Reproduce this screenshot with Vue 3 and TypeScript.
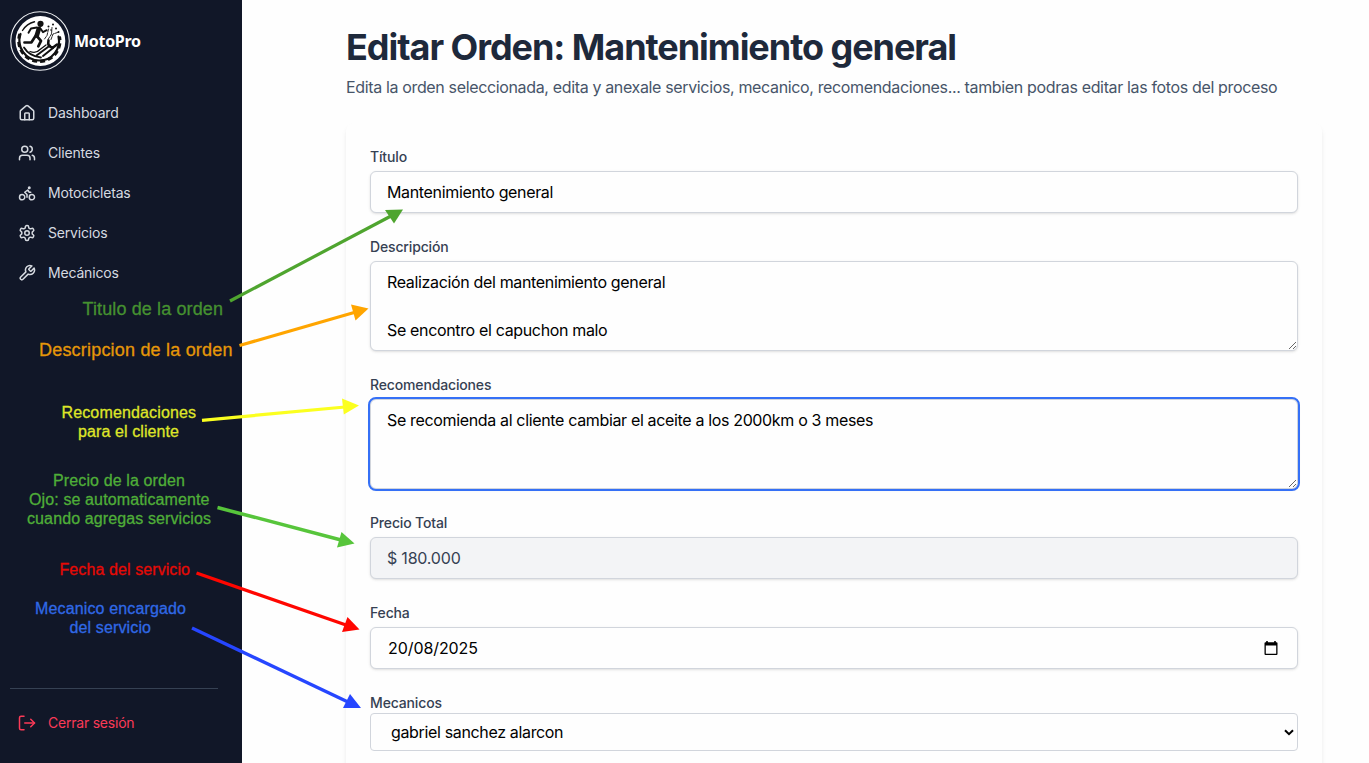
<script setup lang="ts">
interface NavItem { label: string; icon: string[] }
interface Note { lines: { text: string; x: number; y: number; w: number }[]; color: string; size: number }
interface Arrow { from: [number, number]; neck: [number, number]; head: string; color: string; width: number }

const nav: NavItem[] = [
  { label: 'Dashboard', icon: [
    'M15 21v-8a1 1 0 0 0-1-1h-4a1 1 0 0 0-1 1v8',
    'M3 10a2 2 0 0 1 .709-1.528l7-6a2 2 0 0 1 2.582 0l7 6A2 2 0 0 1 21 10v9a2 2 0 0 1-2 2H5a2 2 0 0 1-2-2z'] },
  { label: 'Clientes', icon: [
    'M16 21v-2a4 4 0 0 0-4-4H6a4 4 0 0 0-4 4v2',
    'M5 7a4 4 0 1 0 8 0a4 4 0 1 0-8 0',
    'M22 21v-2a4 4 0 0 0-3-3.87',
    'M16 3.13a4 4 0 0 1 0 7.75'] },
  { label: 'Motocicletas', icon: [
    'M15 17.5a3.5 3.5 0 1 0 7 0a3.5 3.5 0 1 0-7 0',
    'M2 17.5a3.5 3.5 0 1 0 7 0a3.5 3.5 0 1 0-7 0',
    'M14 5a1 1 0 1 0 2 0a1 1 0 1 0-2 0',
    'M12 17.5V14l-3-3 4-3 2 3h2'] },
  { label: 'Servicios', icon: [
    'M12.22 2h-.44a2 2 0 0 0-2 2v.18a2 2 0 0 1-1 1.73l-.43.25a2 2 0 0 1-2 0l-.15-.08a2 2 0 0 0-2.73.73l-.22.38a2 2 0 0 0 .73 2.73l.15.1a2 2 0 0 1 1 1.72v.51a2 2 0 0 1-1 1.74l-.15.09a2 2 0 0 0-.73 2.73l.22.38a2 2 0 0 0 2.73.73l.15-.08a2 2 0 0 1 2 0l.43.25a2 2 0 0 1 1 1.73V20a2 2 0 0 0 2 2h.44a2 2 0 0 0 2-2v-.18a2 2 0 0 1 1-1.73l.43-.25a2 2 0 0 1 2 0l.15.08a2 2 0 0 0 2.73-.73l.22-.39a2 2 0 0 0-.73-2.73l-.15-.08a2 2 0 0 1-1-1.74v-.5a2 2 0 0 1 1-1.74l.15-.09a2 2 0 0 0 .73-2.73l-.22-.38a2 2 0 0 0-2.73-.73l-.15.08a2 2 0 0 1-2 0l-.43-.25a2 2 0 0 1-1-1.73V4a2 2 0 0 0-2-2z',
    'M9 12a3 3 0 1 0 6 0a3 3 0 1 0-6 0'] },
  { label: 'Mecánicos', icon: [
    'M14.7 6.3a1 1 0 0 0 0 1.4l1.6 1.6a1 1 0 0 0 1.4 0l3.77-3.77a6 6 0 0 1-7.94 7.94l-6.91 6.91a2.12 2.12 0 0 1-3-3l6.91-6.91a6 6 0 0 1 7.94-7.94l-3.76 3.76z'] },
]

const descripcion = 'Realización del mantenimiento general\n\nSe encontro el capuchon malo'
const recomendaciones = 'Se recomienda al cliente cambiar el aceite a los 2000km o 3 meses'

const notes: Note[] = [
  { color: '#459130', size: 18, lines: [{ text: 'Titulo de la orden', x: 82.5, y: 315, w: 140.5 }] },
  { color: '#e59708', size: 18, lines: [{ text: 'Descripcion de la orden', x: 39, y: 356, w: 193.5 }] },
  { color: '#dfe528', size: 16, lines: [
    { text: 'Recomendaciones', x: 61.5, y: 418, w: 134.5 },
    { text: 'para el cliente', x: 78, y: 437, w: 101 }] },
  { color: '#4fae38', size: 16, lines: [
    { text: 'Precio de la orden', x: 53, y: 486, w: 132 },
    { text: 'Ojo: se automaticamente', x: 29, y: 505, w: 180.5 },
    { text: 'cuando agregas servicios', x: 27, y: 524, w: 184 }] },
  { color: '#e60a05', size: 16, lines: [{ text: 'Fecha del servicio', x: 59.5, y: 575, w: 130.5 }] },
  { color: '#3069e6', size: 16, lines: [
    { text: 'Mecanico encargado', x: 35, y: 614, w: 151 },
    { text: 'del servicio', x: 69.5, y: 633, w: 81.5 }] },
]

const arrows: Arrow[] = [
  { from: [230, 301], neck: [391, 216], head: '403,209.5 385,210 394,223.5', color: '#4fa52f', width: 3.2 },
  { from: [239.5, 345.5], neck: [355, 312.3], head: '368.5,308.5 351,304.5 355.5,320.5', color: '#ffa500', width: 3.2 },
  { from: [202, 420.3], neck: [345, 407], head: '359,405.5 342,398.5 343.8,414.5', color: '#fbff1f', width: 3.2 },
  { from: [217.5, 507.5], neck: [341, 540], head: '354.5,543.5 341.5,532 337,547.5', color: '#57c53b', width: 3.4 },
  { from: [196.5, 573], neck: [346, 625], head: '359.5,629.5 347.5,617 342,632', color: '#ff0600', width: 3.4 },
  { from: [192, 628], neck: [348, 702], head: '361,708 350,694 343,708', color: '#2646ff', width: 3.4 },
]
</script>

<template>
  <div class="page">
    <aside class="sidebar">
      <header class="brand">
        <svg class="logo" viewBox="0 0 60 60">
          <circle cx="30" cy="30" r="29.3" fill="none" stroke="#eef0f3" stroke-width="1.1" />
          <circle cx="30.4" cy="30" r="24.9" fill="#fff" />
          <g fill="none" stroke="#111" stroke-linecap="round" stroke-linejoin="round">
            <path d="M10.500 23A20 20 0 0 0 29.500 49.500A19.500 19.500 0 0 0 48.500 25.500" stroke-width="2.200" />
            <path d="M9.800 23A20.800 20.800 0 0 0 29.500 50.500A20.500 20.500 0 0 0 49.500 25.500" stroke-width="3" stroke-linecap="butt" stroke-dasharray="5 3" />
            <path d="M12.500 19.500A20 20 0 0 1 24.500 10.800" stroke-width="1.400" />
            <path d="M28.800 17.800L26.800 24.500" stroke-width="4.600" />
            <path d="M27 16.500L21 17.500L18.500 21.800M30.500 17.500L33 21.200L36.700 19.200" stroke-width="1.900" />
            <path d="M25.500 25L21.500 31.300L14.500 31.500M26.800 25L31 29.800L28.300 35.300" stroke-width="2.700" />
            <path d="M14 36.500Q19 45 31 46.500" stroke-width="1.800" />
            <path d="M20 40.500Q26 43 30 38.500L36 34" stroke-width="1.300" />
            <path d="M26.500 44.500L40 34.500M33 45L43 37" stroke-width="2" />
            <path d="M38.500 29.500Q37 36 43 36.500L47 33.500" stroke-width="2.600" />
            <path d="M34.500 28L37 24.500L38.500 18M38 28.500L41.500 23L42 16.500M41 28.500L43 23L47.500 21.500" stroke-width=".9" stroke-dasharray="3 1" />
          </g>
          <g fill="#111">
            <circle cx="30.500" cy="12.800" r="3.100" />
            <circle cx="38.500" cy="15.500" r="1" /><circle cx="43" cy="13.500" r="1" />
            <circle cx="46" cy="17.500" r="1" /><circle cx="48.500" cy="21" r="1" />
            <circle cx="41" cy="19" r=".8" />
          </g>
        </svg>
        <span class="brand-name">MotoPro</span>
      </header>
      <nav class="nav">
        <a v-for="item in nav" :key="item.label" class="nav-item">
          <svg class="icon" viewBox="0 0 24 24"><path v-for="d in item.icon" :key="d" :d="d" /></svg>
          <span>{{ item.label }}</span>
        </a>
      </nav>
      <footer class="foot">
        <a class="nav-item logout">
          <svg class="icon" viewBox="0 0 24 24">
            <path d="M8 3H4a2 2 0 0 0-2 2v14a2 2 0 0 0 2 2h4" /><path d="m17 17 5-5-5-5" /><path d="M22 12H9" />
          </svg>
          <span>Cerrar sesión</span>
        </a>
      </footer>
    </aside>

    <main class="main">
      <h1 class="title">Editar Orden: Mantenimiento general</h1>
      <p class="subtitle">Edita la orden seleccionada, edita y anexale servicios, mecanico, recomendaciones... tambien podras editar las fotos del proceso</p>
      <form class="card">
        <div class="field">
          <label class="label">Título</label>
          <div class="control">Mantenimiento general</div>
        </div>
        <div class="field">
          <label class="label">Descripción</label>
          <textarea class="control area" rows="3" :value="descripcion" spellcheck="false"></textarea>
        </div>
        <div class="field">
          <label class="label">Recomendaciones</label>
          <textarea class="control area focused" rows="3" :value="recomendaciones" spellcheck="false"></textarea>
        </div>
        <div class="field">
          <label class="label">Precio Total</label>
          <div class="control readonly">$ 180.000</div>
        </div>
        <div class="field">
          <label class="label">Fecha</label>
          <div class="control date">
            <span>20/08/2025</span>
            <svg class="calendar" viewBox="0 0 14 15">
              <path d="M2.2 0h1.6v1.2h6.4V0h1.6v1.2h.7a1 1 0 0 1 1 1V13a1 1 0 0 1-1 1h-11a1 1 0 0 1-1-1V2.200a1 1 0 0 1 1-1h.7zM1.800 4.600v8.100h10.400V4.600z" fill="#000" fill-rule="evenodd" />
            </svg>
          </div>
        </div>
        <div class="field last">
          <label class="label">Mecanicos</label>
          <div class="control select">
            <span>gabriel sanchez alarcon</span>
            <svg class="chevron" viewBox="0 0 10 7"><path d="M1 1.200l4 4 4-4" fill="none" stroke="#000" stroke-width="2" /></svg>
          </div>
        </div>
      </form>
    </main>

    <svg class="overlay" viewBox="0 0 1369 763">
      <g v-for="a in arrows" :key="a.color">
        <line :x1="a.from[0]" :y1="a.from[1]" :x2="a.neck[0]" :y2="a.neck[1]" :stroke="a.color" :stroke-width="a.width" />
        <polygon :points="a.head" :fill="a.color" />
      </g>
      <g v-for="n in notes" :key="n.color" :fill="n.color" :stroke="n.color" stroke-width=".3" :font-size="n.size">
        <text v-for="l in n.lines" :key="l.text" :x="l.x" :y="l.y" :textLength="l.w">{{ l.text }}</text>
      </g>
    </svg>
  </div>
</template>

<style>
html, body { margin: 0; overflow: hidden; }
</style>

<style scoped>
.page {
  position: relative;
  display: flex;
  width: 1369px;
  height: 763px;
  overflow: hidden;
  background: #fefefe;
  font-family: Inter, "Liberation Sans", sans-serif;
}
.page * { box-sizing: border-box; }
.sidebar {
  flex: none;
  display: flex;
  flex-direction: column;
  width: 242px;
  height: 763px;
  padding: 11px 10px 20px;
  background: #111728;
}
.brand { display: flex; align-items: center; gap: 4px; height: 60px; }
.logo { width: 60px; height: 60px; }
.brand-name { font: 700 16px/24px "Noto Sans", sans-serif; letter-spacing: -.3px; color: #fff; }
.nav { margin-top: 22px; }
.nav-item {
  display: flex;
  align-items: center;
  gap: 12px;
  height: 40px;
  padding-left: 8px;
  color: #d6dae0;
  font-size: 14px;
  line-height: 20px;
  letter-spacing: -.18px;
}
.icon {
  width: 18px;
  height: 18px;
  fill: none;
  stroke: currentColor;
  stroke-width: 2;
  stroke-linecap: round;
  stroke-linejoin: round;
}
.foot { margin-top: auto; margin-right: 14px; padding-top: 14px; border-top: 1px solid #364153; }
.logout { color: #fb3a57; letter-spacing: -.22px; }
.main { flex: none; width: 976px; margin-left: 104px; padding-top: 27px; }
.title { margin: 0; font-size: 36px; line-height: 40px; font-weight: 700; letter-spacing: -1.04px; color: #1e293b; white-space: nowrap; }
.subtitle { margin: 8px 0 24px; font-size: 16px; line-height: 24px; letter-spacing: -.352px; color: #475569; white-space: nowrap; }
.card {
  height: 700px;
  padding: 24px;
  border-radius: 8px;
  background: #fefefe;
  box-shadow: 0 4px 6px -1px rgb(0 0 0 / .08), 0 2px 4px -2px rgb(0 0 0 / .08);
}
.field { margin-bottom: 24px; }
.label { display: block; margin-bottom: 4px; font-size: 14px; line-height: 20px; font-weight: 500; letter-spacing: -.15px; color: #364153; }
.last .label { margin-bottom: 0; }
.control {
  display: block;
  width: 100%;
  height: 42px;
  margin: 0;
  padding: 8px 16px;
  border: 1px solid #d1d5dc;
  border-radius: 6px;
  background: #fefefe;
  box-shadow: 0 1px 3px rgb(0 0 0 / .1), 0 1px 2px -1px rgb(0 0 0 / .1);
  font: 400 16px/24px Inter, "Liberation Sans", sans-serif;
  letter-spacing: -.345px;
  color: #000;
}
.area { height: 90px; resize: vertical; outline: none; }
.focused { outline: 2px solid #3570f6; outline-offset: 0; }
.readonly { background: #f3f4f6; color: #364153; letter-spacing: -.2px; }
.date { display: flex; align-items: center; justify-content: space-between; padding-left: 17px; padding-right: 19px; letter-spacing: -.08px; }
.calendar { width: 14px; height: 15px; }
.select {
  display: flex;
  align-items: center;
  justify-content: space-between;
  height: 38px;
  padding: 0 3px 0 20px;
  border-radius: 4px;
  box-shadow: none;
}
.chevron { width: 10px; height: 7px; }
.overlay {
  position: absolute;
  inset: 0;
  width: 1369px;
  height: 763px;
  pointer-events: none;
  font-family: "Liberation Sans", Arial, sans-serif;
}
</style>
